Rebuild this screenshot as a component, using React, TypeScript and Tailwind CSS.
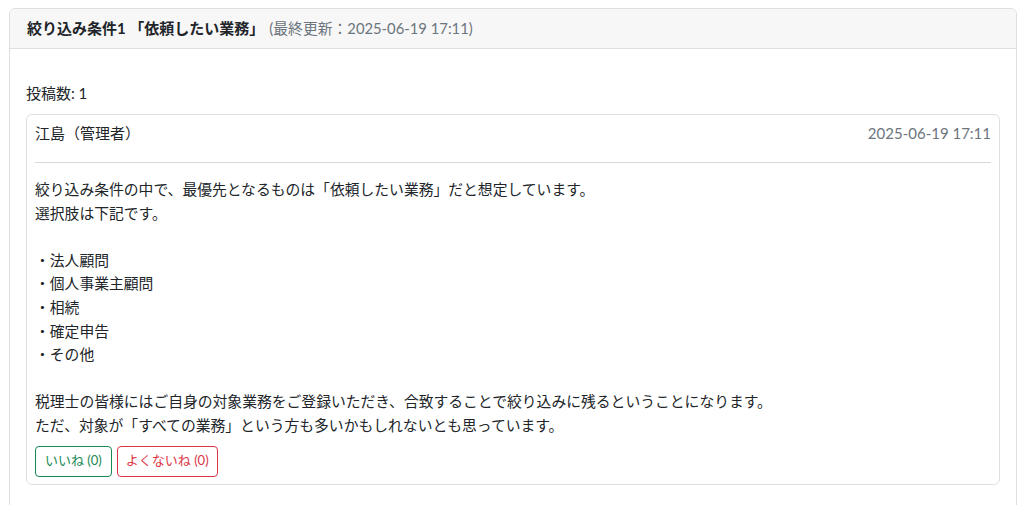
import React from "react";

const font = { fontFamily: 'Lato, "Noto Sans CJK JP", "Noto Sans", sans-serif' };

export default function App() {
  const lines: string[] = [
    "絞り込み条件の中で、最優先となるものは「依頼したい業務」だと想定しています。",
    "選択肢は下記です。",
    "",
    "・法人顧問",
    "・個人事業主顧問",
    "・相続",
    "・確定申告",
    "・その他",
    "",
    "税理士の皆様にはご自身の対象業務をご登録いただき、合致することで絞り込みに残るということになります。",
    "ただ、対象が「すべての業務」という方も多いかもしれないとも思っています。",
  ];
  return (
    <div className="w-[1024px] h-[505px] overflow-hidden bg-white text-[#212529]" style={font}>
      <div className="ml-[9px] mt-[8px] w-[1008px] h-[520px] border border-[#dfdfdf] rounded-[6px]">
        <div className="h-[40px] flex items-center px-[17px] bg-[#f7f7f7] border-b border-[#dfdfdf] rounded-t-[6px]">
          <span className="text-[15px] font-bold">絞り込み条件1 「依頼したい業務」</span>
          <span className="ml-[5px] text-[14.8px] text-[#6c757d]">(最終更新：2025-06-19 17:11)</span>
        </div>
        <div className="px-[16px] pt-[32px]">
          <div className="text-[15px] leading-[24px]">投稿数: 1</div>
          <div className="mt-[9px] border border-[#dfdfdf] rounded-[6px] px-[8px] pt-[6px] pb-[7px]">
            <div className="flex justify-between items-center text-[15px] leading-[24px]">
              <span>江島（管理者）</span>
              <span className="text-[#6c757d]">2025-06-19 17:11</span>
            </div>
            <div className="mt-[17px] border-t border-[#d9d9d9]" />
            <div className="mt-[15px] text-[14.8px] leading-[23.6px]">
              {lines.map((l, i) => (
                <div key={i} className="h-[23.6px] whitespace-nowrap">{l}</div>
              ))}
            </div>
            <div className="mt-[8px] flex gap-[5px]">
              <button className="h-[31px] px-[9px] border border-[#198754] text-[#198754] rounded-[4px] text-[13px] bg-white">いいね (0)</button>
              <button className="h-[31px] px-[8px] border border-[#dc3545] text-[#dc3545] rounded-[4px] text-[13px] bg-white">よくないね (0)</button>
            </div>
          </div>
        </div>
      </div>
    </div>
  );
}
